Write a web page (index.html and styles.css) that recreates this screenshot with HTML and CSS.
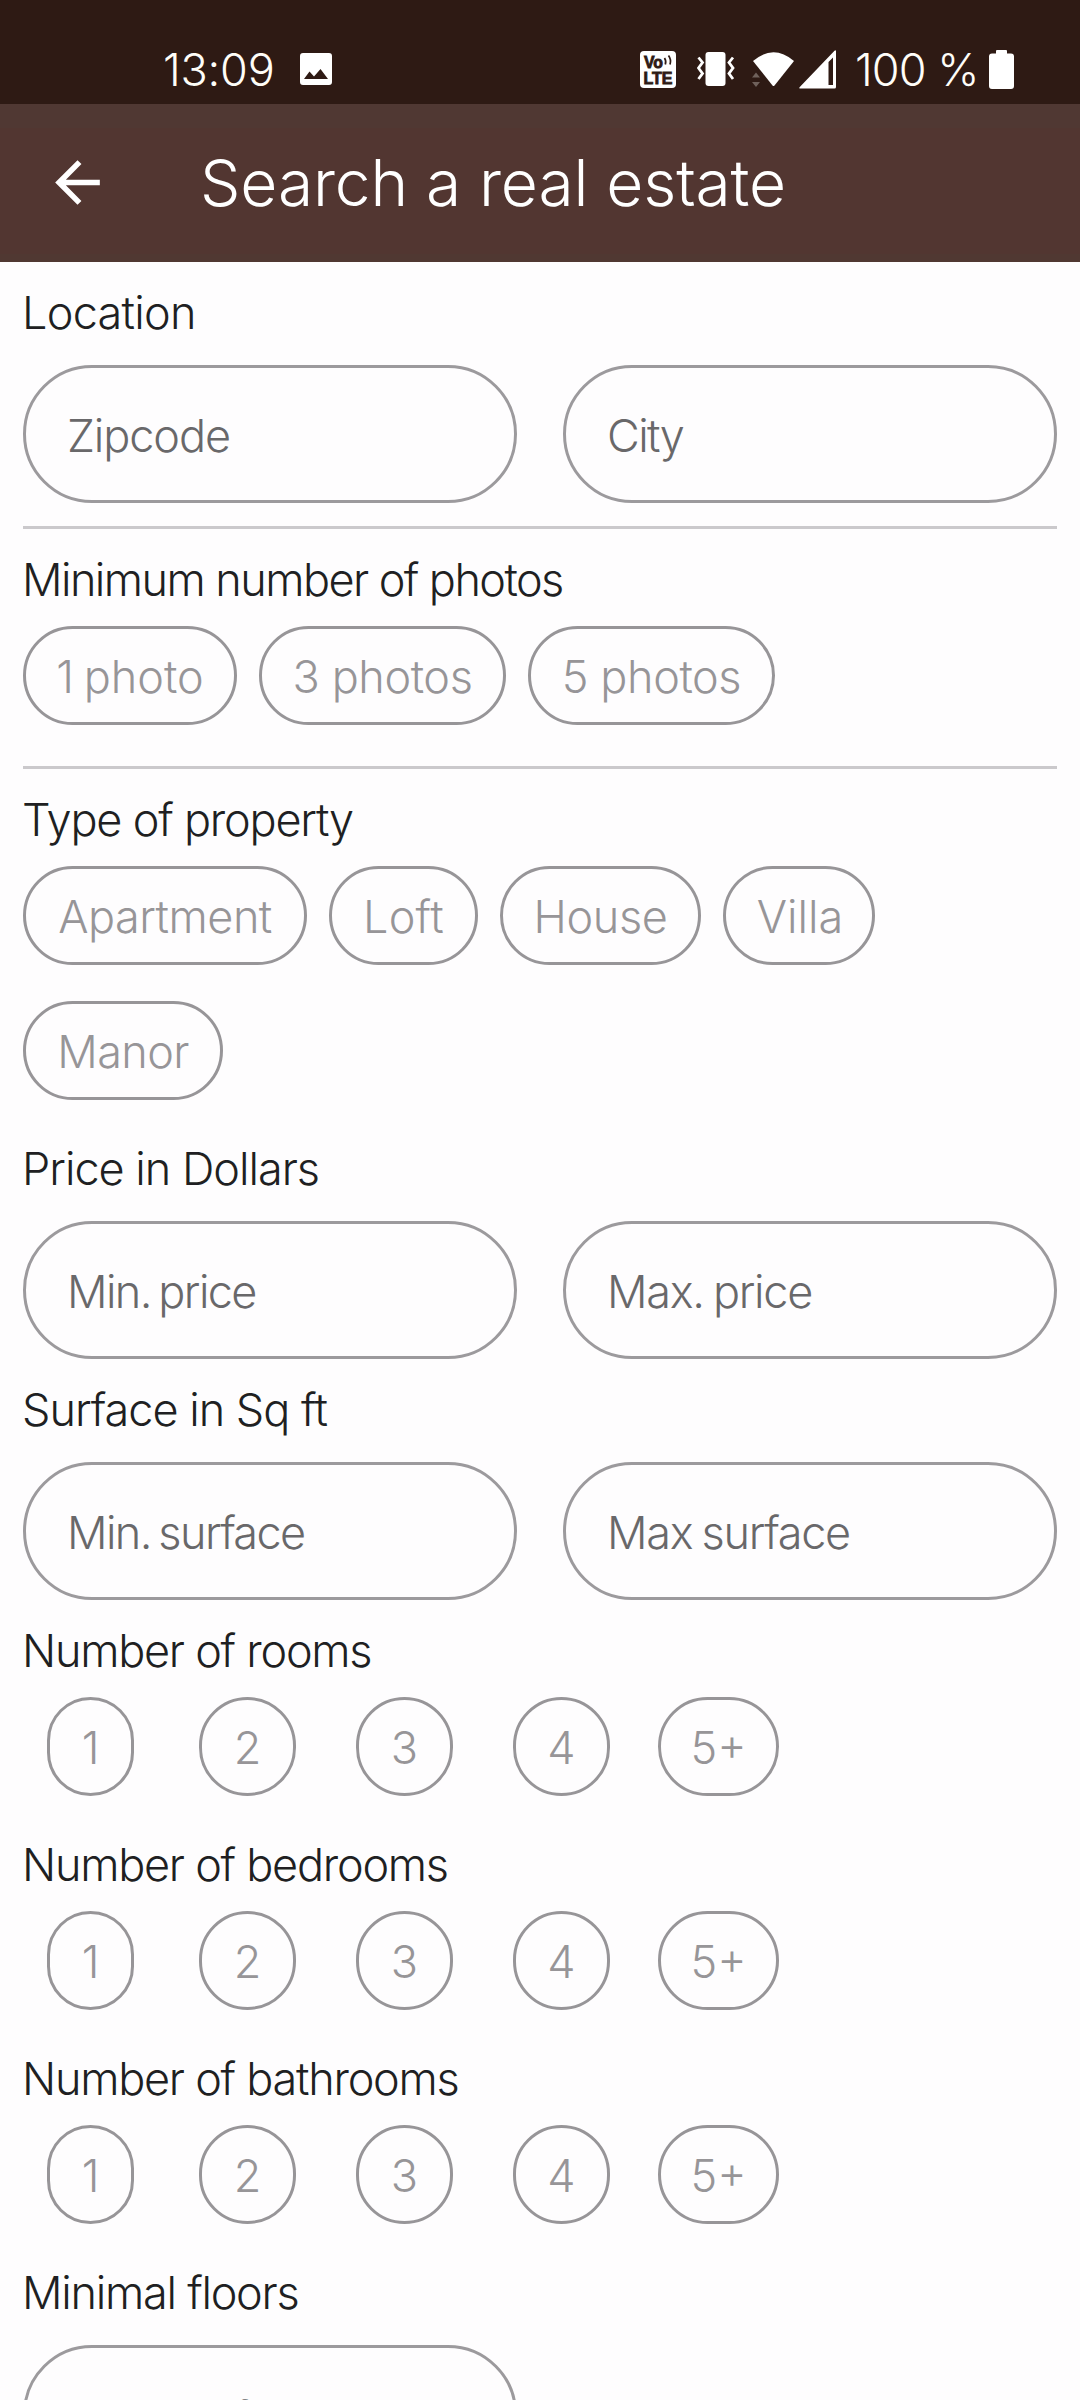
FILE: index.html
```
<!DOCTYPE html>
<html lang="en">
<head>
<meta charset="utf-8">
<title>Search a real estate</title>
<link rel="stylesheet" href="styles.css">
</head>
<body>
<div class="screen">
  <div class="status-bar">
    <div class="status-left">
      <span class="clock">13:09</span>
      <svg class="icon-photo" width="32" height="32" viewBox="0 0 32 32"><path fill="#fff" fill-rule="evenodd" d="M3 0h26a3 3 0 0 1 3 3v26a3 3 0 0 1-3 3H3a3 3 0 0 1-3-3V3a3 3 0 0 1 3-3zM4 26h24l-7.500-10-6.500 7.500-4.500-5z"/></svg>
    </div>
    <div class="status-right">
      <svg class="icon-volte" width="36" height="37" viewBox="0 0 36 37">
        <rect width="36" height="37" rx="4" fill="#fff"/>
        <text class="volte-text" x="4" y="16.500" textLength="19" lengthAdjust="spacingAndGlyphs">Vo</text>
        <text class="volte-text" x="3.500" y="32.500" textLength="29" lengthAdjust="spacingAndGlyphs">LTE</text>
        <path d="M24.500 7q2 3 .8 6.500M28.500 4.500q3 4 1.500 9" fill="none" stroke="#2e1a14" stroke-width="1.700"/>
      </svg>
      <svg class="icon-vibrate" width="38" height="36" viewBox="0 0 38 36">
        <rect x="8.500" y="1" width="20" height="34" rx="3" fill="#fff"/>
        <path d="M1.500 6.500l4 5-4 5.500 4 5.500-4 5.500M36 6.500l-4 5 4 5.500-4 5.500 4 5.500" fill="none" stroke="#fff" stroke-width="2.800"/>
      </svg>
      <svg class="icon-wifi" width="43" height="36" viewBox="0 0 43 36">
        <path d="M1 10Q21.500-7.500 42 10L22.500 34.500q-1 1-2 0z" fill="#fff"/>
        <path d="M0 26.500h8l-4-5zM0 31h8l-4 5z" fill="#6f615b"/>
      </svg>
      <svg class="icon-signal" width="38" height="39" viewBox="0 0 38 39"><path fill="#fff" fill-rule="evenodd" d="M35.500.8q1.500-1.300 1.500.7V37q0 1.500-1.500 1.500H1.500Q-.5 38.500.8 37zM29.500 12v23h4.500V7.500z"/></svg>
      <span class="battery-level">100 %</span>
      <svg class="icon-battery" width="25" height="39" viewBox="0 0 25 39"><path fill="#fff" d="M7 1q0-1 1-1h9q1 0 1 1v2.500h4q3 0 3 3V36q0 3-3 3H3q-3 0-3-3V6.500q0-3 3-3h4z"/></svg>
    </div>
  </div>

  <header class="app-bar">
    <svg class="icon-back" width="67" height="67" viewBox="0 0 24 24"><path fill="#fff" d="M20 11H7.830l5.590-5.590L12 4l-8 8 8 8 1.410-1.410L7.830 13H20v-2z"/></svg>
    <h1 class="title">Search a real estate</h1>
  </header>

  <main class="form">
    <section class="group">
      <h2 class="label label-wide">Location</h2>
      <div class="fields">
        <div class="field"><span class="hint">Zipcode</span></div>
        <div class="field"><span class="hint hint-city">City</span></div>
      </div>
    </section>
    <hr class="divider">
    <section class="group">
      <h2 class="label label-photos">Minimum number of photos</h2>
      <div class="chips">
        <div class="chip chip-photo"><span class="photo-count">1 photo</span></div>
        <div class="chip chip-photos">3 photos</div>
        <div class="chip chip-photos">5 photos</div>
      </div>
    </section>
    <hr class="divider divider-after-chips">
    <section class="group">
      <h2 class="label">Type of property</h2>
      <div class="chips">
        <div class="chip chip-apartment">Apartment</div>
        <div class="chip chip-loft">Loft</div>
        <div class="chip chip-house">House</div>
        <div class="chip chip-villa">Villa</div>
        <div class="chip chip-manor">Manor</div>
      </div>
    </section>
    <section class="group after-chips">
      <h2 class="label label-amount">Price in Dollars</h2>
      <div class="fields">
        <div class="field"><span class="hint hint-min">Min. price</span></div>
        <div class="field"><span class="hint hint-max">Max. price</span></div>
      </div>
    </section>
    <section class="group">
      <h2 class="label label-amount">Surface in Sq ft</h2>
      <div class="fields">
        <div class="field"><span class="hint hint-min">Min. surface</span></div>
        <div class="field"><span class="hint hint-max">Max surface</span></div>
      </div>
    </section>
    <section class="group">
      <h2 class="label label-count">Number of rooms</h2>
      <div class="counts">
        <div class="chip count-one">1</div><div class="chip count">2</div><div class="chip count">3</div><div class="chip count">4</div><div class="chip count-more">5+</div>
      </div>
    </section>
    <section class="group after-chips">
      <h2 class="label label-count">Number of bedrooms</h2>
      <div class="counts">
        <div class="chip count-one">1</div><div class="chip count">2</div><div class="chip count">3</div><div class="chip count">4</div><div class="chip count-more">5+</div>
      </div>
    </section>
    <section class="group after-chips">
      <h2 class="label label-count">Number of bathrooms</h2>
      <div class="counts">
        <div class="chip count-one">1</div><div class="chip count">2</div><div class="chip count">3</div><div class="chip count">4</div><div class="chip count-more">5+</div>
      </div>
    </section>
    <section class="group after-chips">
      <h2 class="label label-count">Minimal floors</h2>
      <div class="fields">
        <div class="field field-floors"><span class="hint">Minimal floors</span></div>
      </div>
    </section>
  </main>
</div>
</body>
</html>
```
FILE: styles.css
```
* { box-sizing: border-box; }

body {
  margin: 0;
  background: #fefdfe;
  font-family: Inter, "Liberation Sans", sans-serif;
  font-weight: 300;
  font-size: 45px;
}

.screen {
  width: 1080px;
  height: 2400px;
  overflow: hidden;
}

svg { display: block; flex: none; }

/* Status bar */
.status-bar {
  display: flex;
  justify-content: space-between;
  height: 104px;
  padding: 34px 66px 0 163px;
  background: #2e1a14;
  color: #fffdf8;
}

.status-left,
.status-right {
  display: flex;
  align-items: center;
  height: 70px;
}

.clock,
.battery-level {
  line-height: 70px;
  padding-top: 1px;
  white-space: nowrap;
}

.clock { width: 137px; letter-spacing: -0.2px; }
.battery-level { width: 134px; letter-spacing: -0.9px; }
.icon-volte { margin-right: 21px; }
.icon-vibrate { margin-right: 17px; }
.icon-wifi { margin-right: 4px; }
.icon-signal { margin-right: 18px; }

.volte-text {
  font-family: "Liberation Sans", sans-serif;
  font-weight: 700;
  font-size: 17px;
  fill: #2e1a14;
  stroke: #2e1a14;
  stroke-width: 0.9px;
}

/* App bar */
.app-bar {
  display: flex;
  align-items: center;
  height: 158px;
  padding: 0 0 2px 44px;
  background: linear-gradient(#503833 0 24px, #523631 24px 150px, #503832 150px);
  color: #fff;
}

.title {
  margin: 1px 0 0 89px;
  font-size: 64px;
  font-weight: 300;
  line-height: 80px;
  letter-spacing: -0.1px;
}

/* Form */
.form {
  padding: 0 23px;
  color: #201f22;
}

.group { display: flow-root; }

.label {
  height: 60px;
  margin: 21px 0 0 -1px;
  font-size: 45px;
  font-weight: 300;
  line-height: 60px;
  letter-spacing: -1.2px;
}

.label-wide { letter-spacing: -0.7px; }
.label-photos { letter-spacing: -1.55px; }
.label-amount { letter-spacing: -1px; }
.label-count { letter-spacing: -1.25px; }
.after-chips .label { margin-top: 39px; }

.fields {
  display: grid;
  grid-template-columns: 494px 494px;
  gap: 46px;
  margin-top: 22px;
}

.field {
  display: flex;
  align-items: center;
  height: 138px;
  padding: 3px 0 0 41px;
  border: 3px solid #9c9a9d;
  border-radius: 69px;
  color: #69686a;
}

.field-floors { padding-top: 7px; }

.hint { letter-spacing: -1.1px; white-space: nowrap; }
.hint-city { letter-spacing: -1.6px; }
.hint-min { letter-spacing: -1.6px; word-spacing: -3.5px; }
.hint-max { letter-spacing: -1.3px; word-spacing: -2px; }

.divider {
  height: 3px;
  margin: 23px 0 0;
  border: 0;
  background: #cbc9cc;
}

.divider-after-chips { margin-top: 41px; }

.chips {
  display: flex;
  flex-wrap: wrap;
  gap: 36px 22px;
  margin-top: 16px;
}

.chip {
  display: flex;
  align-items: center;
  justify-content: center;
  height: 99px;
  padding-top: 2px;
  border: 3px solid #979598;
  border-radius: 50px;
  color: #979598;
  white-space: nowrap;
}

.chip-photo { width: 214px; }
.photo-count { word-spacing: -3px; }
.chip-photos { width: 247px; letter-spacing: -0.4px; }
.chip-apartment { width: 284px; letter-spacing: -0.5px; }
.chip-loft { width: 149px; letter-spacing: 0.2px; }
.chip-house { width: 201px; letter-spacing: -0.4px; }
.chip-villa { width: 152px; padding-left: 2px; }
.chip-manor { width: 200px; letter-spacing: -0.6px; }

.counts {
  display: grid;
  grid-template-columns: repeat(5, 157px);
  justify-items: center;
  margin: 16px 0 0 -11px;
}

.count-one { width: 87px; }
.count { width: 97px; }
.count-more { width: 121px; }
```
